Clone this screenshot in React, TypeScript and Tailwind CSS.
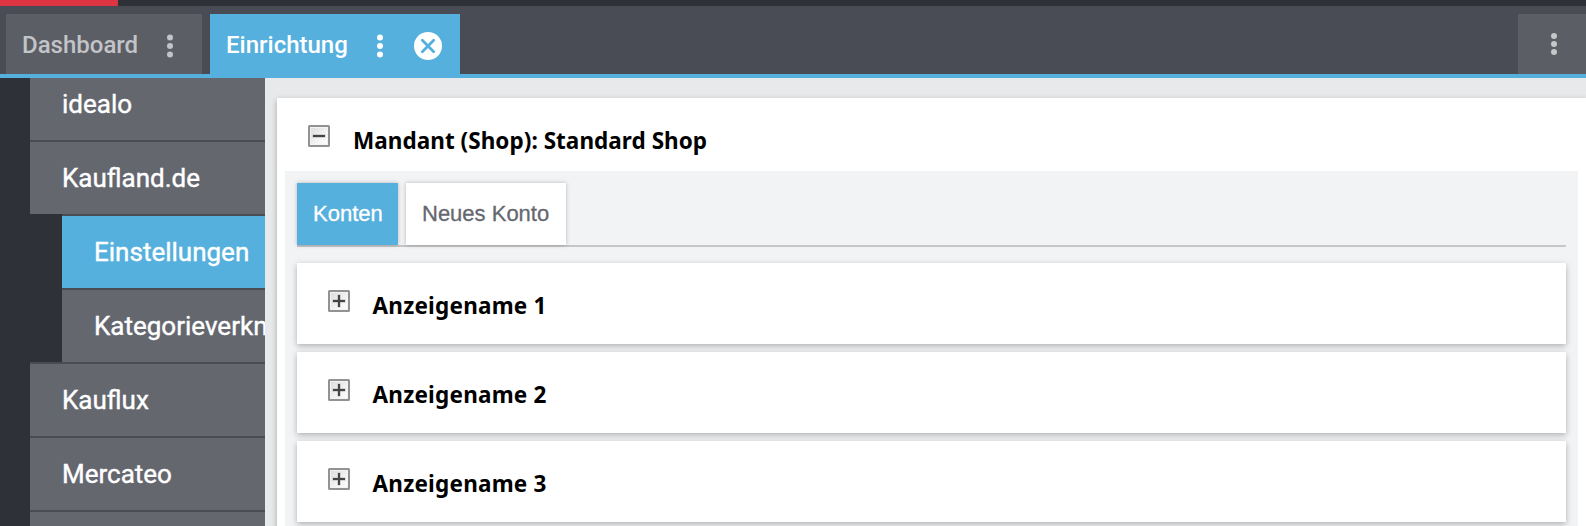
import type { ReactNode } from 'react';

function Dots({ className, gap = 8.4 }: { className?: string; gap?: number }) {
  return (
    <svg width="8" height="26" viewBox="0 0 8 26" fill="currentColor" className={className}>
      <circle cx="4" cy={13 - gap} r="3" />
      <circle cx="4" cy="13" r="3" />
      <circle cx="4" cy={13 + gap} r="3" />
    </svg>
  );
}

function ToggleIcon({ open = false }: { open?: boolean }) {
  return (
    <svg width="22" height="22" viewBox="0 0 22 22" className="shrink-0">
      <defs>
        <linearGradient id="toggle-face" x1="0" y1="0" x2="1" y2="1">
          <stop offset="0" stopColor="#d9d9d9" />
          <stop offset="0.6" stopColor="#f4f4f4" />
          <stop offset="1" stopColor="#ffffff" />
        </linearGradient>
      </defs>
      <rect x="1" y="1" width="20" height="20" rx="0.5" fill="url(#toggle-face)" stroke="#929292" strokeWidth="2" />
      <rect x="2.5" y="2.5" width="17" height="17" fill="none" stroke="#f2f2f2" />
      <path d="M4.5 11H17.5" stroke="#999" strokeWidth="3.4" strokeOpacity="0.5" />
      {!open && <path d="M11 4.5V17.5" stroke="#999" strokeWidth="3.4" strokeOpacity="0.5" />}
      <path d="M5 11H17" stroke="#444" strokeWidth="2" />
      {!open && <path d="M11 5V17" stroke="#444" strokeWidth="2" />}
    </svg>
  );
}

function NavItem({ children, sub = false, active = false }: { children?: ReactNode; sub?: boolean; active?: boolean }) {
  return (
    <div
      className={`flex h-[74px] shrink-0 items-center overflow-hidden border-t-2 border-[#4a4c55] pl-8 whitespace-nowrap ${
        sub ? 'ml-8' : ''
      } ${active ? 'bg-[#56b0dd]' : 'bg-[#65676f]'}`}
    >
      {children}
    </div>
  );
}

function AccountCard({ name }: { name: string }) {
  return (
    <div className="flex h-[81px] shrink-0 items-start bg-white pt-[27px] pl-[31px] shadow-[0_2px_6px_rgba(0,0,0,0.28)]">
      <ToggleIcon />
      <span className="mt-[2px] ml-[22.5px] text-[22.5px] leading-[28px] font-bold tracking-[0.22px]">{name}</span>
    </div>
  );
}

export default function App() {
  return (
    <div className="flex h-[526px] w-full flex-col overflow-hidden bg-[#e8e9eb] font-['Roboto',sans-serif]">
      <div className="h-[6px] shrink-0 bg-[#2f3139]">
        <div className="h-full w-[118px] bg-[#df3543]" />
      </div>
      <header className="flex h-[72px] shrink-0 items-end border-b-4 border-[#56b0dd] bg-[#4a4c55] pl-[6px] text-[24px] font-medium">
        <div className="flex h-[60px] w-[196px] items-center bg-[#5c5e66] pl-4 text-[#c3c4c8]">
          <span className="w-[144px] pt-[1px]">Dashboard</span>
          <Dots className="mt-[4px]" />
        </div>
        <div className="ml-2 flex h-[60px] w-[250px] items-center bg-[#56b0dd] pl-4 text-white">
          <span className="w-[150px] pt-[1px]">Einrichtung</span>
          <Dots className="mt-[4px]" />
          <svg width="28" height="28" viewBox="0 0 28 28" className="mt-[4px] ml-[30px]">
            <circle cx="14" cy="14" r="14" fill="#fff" />
            <path d="M8.3 8.3L19.7 19.7M19.7 8.3L8.3 19.7" stroke="#56b0dd" strokeWidth="2.8" strokeLinecap="round" />
          </svg>
        </div>
        <div className="ml-auto flex h-[60px] w-[68px] items-center justify-center bg-[#5c5e66] pl-[4px] text-[#c6c7cb]">
          <Dots gap={8} />
        </div>
      </header>

      <div className="flex min-h-0 flex-1">
        <nav className="flex w-[265px] shrink-0 flex-col overflow-hidden bg-[#2f3139] pl-[30px] text-[26px] text-white [-webkit-text-stroke:0.4px_currentColor]">
          <div className="-mt-3 flex flex-col">
            <NavItem>idealo</NavItem>
            <NavItem>Kaufland.de</NavItem>
            <NavItem sub active>
              Einstellungen
            </NavItem>
            <NavItem sub>Kategorieverknüpfung</NavItem>
            <NavItem>Kauflux</NavItem>
            <NavItem>Mercateo</NavItem>
            <NavItem />
          </div>
        </nav>

        <main className="min-w-0 flex-1 overflow-hidden pt-5 pl-3 font-['Noto_Sans',sans-serif] text-black">
          <section className="flex h-[480px] flex-col bg-white px-2 shadow-[0_2px_6px_rgba(0,0,0,0.28)]">
            <div className="flex h-[73px] shrink-0 items-start pt-[27px] pl-[23px]">
              <ToggleIcon open />
              <span className="mt-[2px] ml-[23px] text-[22.5px] leading-[28px] font-bold tracking-[0.04px]">
                Mandant (Shop): Standard Shop
              </span>
            </div>
            <div className="flex flex-1 flex-col bg-[#f2f3f5] px-3 pt-3">
              <div className="flex h-[64px] shrink-0 gap-2 border-b-2 border-[#c5c6c8] font-['Liberation_Sans',sans-serif] text-[22px] [-webkit-text-stroke:0.3px_currentColor]">
                <div className="flex w-[101px] items-center bg-[#56b0dd] pb-[2px] pl-4 text-white shadow-[0_0_4px_rgba(0,0,0,0.25)]">
                  Konten
                </div>
                <div className="flex w-[160px] items-center bg-white pb-[2px] pl-4 text-[#65676f] shadow-[0_0_4px_rgba(0,0,0,0.25)]">
                  Neues Konto
                </div>
              </div>
              <div className="mt-4 flex flex-col gap-2">
                <AccountCard name="Anzeigename 1" />
                <AccountCard name="Anzeigename 2" />
                <AccountCard name="Anzeigename 3" />
              </div>
            </div>
          </section>
        </main>
      </div>
    </div>
  );
}
